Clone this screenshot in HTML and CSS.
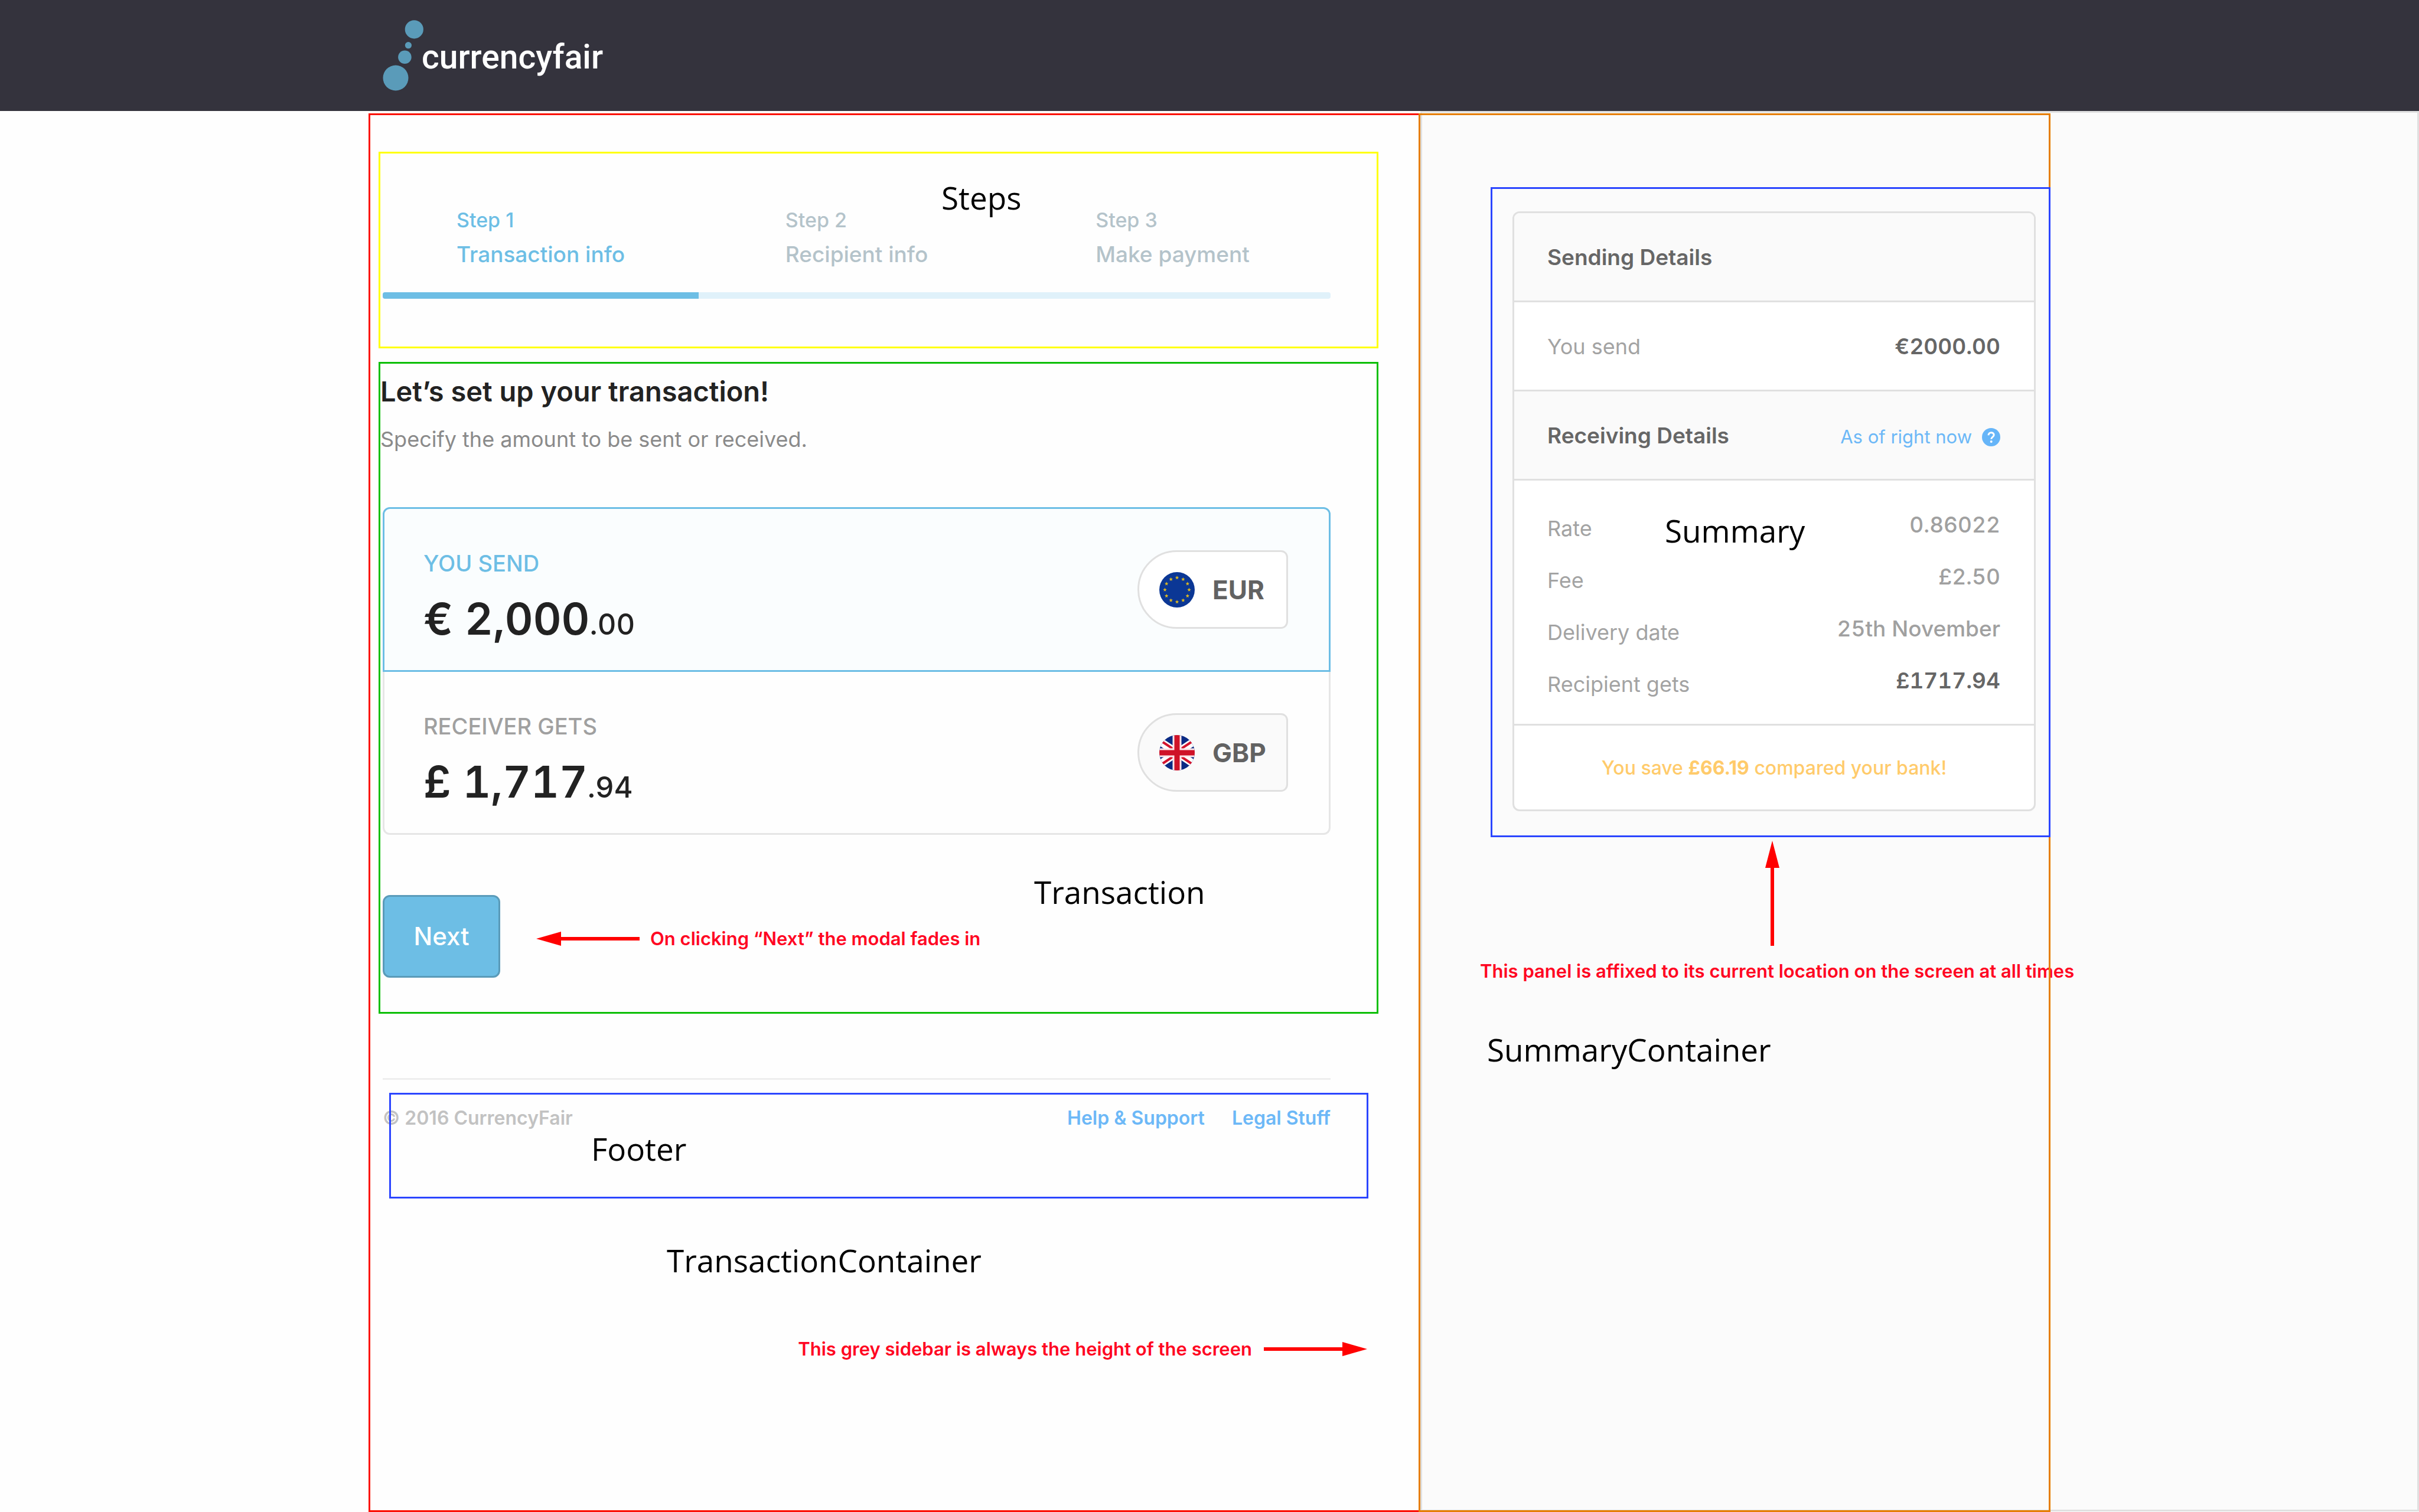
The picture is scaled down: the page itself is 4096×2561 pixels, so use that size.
FILE: index.html
```
<!DOCTYPE html>
<html lang="en">
<head>
<meta charset="utf-8">
<meta name="viewport" content="width=device-width, initial-scale=1">
<title>CurrencyFair – Transaction info</title>
<link rel="stylesheet" href="styles.css">
</head>
<body>
<header class="site-header">
  <a class="logo" href="#">
    <svg class="logo-mark" viewBox="0 0 66 120" aria-hidden="true">
      <circle cx="22" cy="98" r="21.5"/>
      <circle cx="37.4" cy="62.7" r="11.3"/>
      <circle cx="43.4" cy="42.7" r="5.6"/>
      <circle cx="53.3" cy="15.8" r="15.6"/>
    </svg>
    <span class="logo-name">currencyfair</span>
  </a>
</header>

<main class="page">
  <div class="sidebar"></div>

  <div class="transaction-container">
    <section class="steps">
      <ol class="step-list">
        <li class="step step-current"><div><span class="step-number">Step 1</span><span class="step-name">Transaction info</span></div></li>
        <li class="step"><div><span class="step-number">Step 2</span><span class="step-name">Recipient info</span></div></li>
        <li class="step"><div><span class="step-number">Step 3</span><span class="step-name">Make payment</span></div></li>
      </ol>
      <div class="track" role="progressbar" aria-label="Progress" aria-valuemin="0" aria-valuemax="3" aria-valuenow="1"><div class="track-fill"></div></div>
      <span class="region-name name-steps">Steps</span>
    </section>

    <section class="transaction">
      <h1 class="title">Let’s set up your transaction!</h1>
      <p class="lead">Specify the amount to be sent or received.</p>

      <div class="amount amount-active">
        <div class="amount-text">
          <span class="amount-label">YOU SEND</span>
          <span class="amount-value">€ 2,000<span class="cents">.00</span></span>
        </div>
        <button class="currency" type="button">
          <svg class="flag" viewBox="0 0 60 60" aria-hidden="true">
            <defs><path id="star" d="M0-3.4 .9-1.2 3.2-1 1.4.5 2 2.8 0 1.6-2 2.8-1.4.5-3.2-1-.9-1.2z"/></defs>
            <circle cx="30" cy="30" r="30" fill="#0b3795"/>
            <g fill="#dcb822">
              <use href="#star" x="30" y="9.5"/><use href="#star" x="40.3" y="12.2"/><use href="#star" x="47.8" y="19.7"/>
              <use href="#star" x="50.5" y="30"/><use href="#star" x="47.8" y="40.3"/><use href="#star" x="40.3" y="47.8"/>
              <use href="#star" x="30" y="50.5"/><use href="#star" x="19.7" y="47.8"/><use href="#star" x="12.2" y="40.3"/>
              <use href="#star" x="9.5" y="30"/><use href="#star" x="12.2" y="19.7"/><use href="#star" x="19.7" y="12.2"/>
            </g>
          </svg>
          EUR
        </button>
      </div>

      <div class="amount">
        <div class="amount-text">
          <span class="amount-label">RECEIVER GETS</span>
          <span class="amount-value">£ 1,717<span class="cents">.94</span></span>
        </div>
        <button class="currency" type="button">
          <svg class="flag" viewBox="0 0 60 60" aria-hidden="true">
            <defs><clipPath id="disc"><circle cx="30" cy="30" r="30"/></clipPath></defs>
            <g clip-path="url(#disc)">
              <path fill="#0a2a84" d="M0 0h60v60H0z"/>
              <path stroke="#fff" stroke-width="13" d="M-6 6 66 54M-6 54 66 6"/>
              <path stroke="#d3142e" stroke-width="4" d="M-6 4 30 28M30 32l36 24M-6 56l36-24M30 28 66 4"/>
              <path stroke="#fbe6ea" stroke-width="15" d="M30 0v60M0 30h60"/>
              <path stroke="#cf1228" stroke-width="9" d="M30 0v60M0 30h60"/>
            </g>
          </svg>
          GBP
        </button>
      </div>

      <div class="actions">
        <button class="next" type="button">Next</button>
        <div class="note note-next">
          <svg class="arrow" viewBox="0 0 175 24" aria-hidden="true"><path d="M0 12 42 0v9h133v6H42v9z"/></svg>
          <span>On clicking “Next” the modal fades in</span>
        </div>
      </div>
      <span class="region-name name-transaction">Transaction</span>
    </section>

    <footer class="footer">
      <span class="copyright">© 2016 CurrencyFair</span>
      <nav class="footer-links"><a href="#">Help &amp; Support</a><a href="#">Legal Stuff</a></nav>
      <div class="footer-frame"></div>
      <span class="region-name name-footer">Footer</span>
    </footer>

    <span class="region-name name-transaction-container">TransactionContainer</span>
    <div class="note note-sidebar">
      <span>This grey sidebar is always the height of the screen</span>
      <svg class="arrow" viewBox="0 0 175 24" aria-hidden="true"><path d="M175 12 133 0v9H0v6h133v9z"/></svg>
    </div>
  </div>

  <aside class="summary-container">
    <section class="summary">
      <div class="card">
        <div class="row row-head"><h2 class="row-title">Sending Details</h2></div>
        <div class="row"><span class="row-label">You send</span><strong class="row-value">€2000.00</strong></div>
        <div class="row row-head">
          <h2 class="row-title">Receiving Details</h2>
          <a class="rate-time" href="#">As of right now
            <svg class="help" viewBox="0 0 31 31" aria-hidden="true">
              <circle cx="15.5" cy="15.5" r="15.5" fill="#66b5f8"/>
              <path d="M11 12.2c0-6 9.200-5.800 9.200-.4 0 3.200-4.500 3.400-4.500 7" fill="none" stroke="#fff" stroke-width="3"/>
              <circle cx="15.700" cy="23" r="2" fill="#fff"/>
            </svg>
          </a>
        </div>
        <dl class="details">
          <div class="detail"><dt>Rate</dt><dd>0.86022</dd></div>
          <div class="detail"><dt>Fee</dt><dd>£2.50</dd></div>
          <div class="detail"><dt>Delivery date</dt><dd>25th November</dd></div>
          <div class="detail"><dt>Recipient gets</dt><dd class="total">£1717.94</dd></div>
        </dl>
        <p class="saving">You save <b>£66.19</b> compared your bank!</p>
      </div>
      <span class="region-name name-summary">Summary</span>
    </section>
    <svg class="arrow-up" viewBox="0 0 24 178" aria-hidden="true"><path d="M12 0 24 46h-9v132H9V46H0z"/></svg>
    <p class="note note-panel">This panel is affixed to its current location on the screen at all times</p>
    <span class="region-name name-summary-container">SummaryContainer</span>
  </aside>
</main>
</body>
</html>
```

FILE: styles.css
```
:root {
  --columns: 624fr 1781fr 1067fr 624fr;
  --blue: #6dbee5;
  --line: #e0e0e0;
  --header: 188px;
}

* { box-sizing: border-box; }

body {
  margin: 0;
  min-height: 100vh;
  display: flex;
  flex-direction: column;
  background: #fefefe;
  color: #222;
  font: 500 37px/48px "Inter", "Liberation Sans", sans-serif;
}

h1, h2, p, ol, dl, dd { margin: 0; padding: 0; }
a { text-decoration: none; }
button { font: inherit; cursor: pointer; }

/* Header */
.site-header {
  display: grid;
  grid-template-columns: var(--columns);
  height: var(--header);
  background: #34333d;
}
.logo {
  grid-column: 2;
  display: flex;
  align-items: center;
  padding-left: 24px;
  color: #fff;
}
.logo-mark { width: 66px; height: 120px; overflow: visible; fill: #5a9bb9; }
.logo-name { padding-top: 6px; font: 500 57px/66px "Roboto", sans-serif; }

/* Page columns */
.page {
  flex: 1;
  display: grid;
  grid-template-columns: var(--columns);
}
.sidebar {
  grid-area: 1 / 3 / 2 / 5;
  margin-bottom: 1px;
  background: #fbfbfb;
  border: 3px solid var(--line);
}
.transaction-container {
  grid-area: 1 / 2 / 2 / 3;
  position: relative;
  margin-top: 4px;
  padding: 62px 71px 0 14px;
  border: 3px solid #fb1100;
  border-right: 0;
}
.summary-container {
  grid-area: 1 / 3 / 2 / 4;
  position: relative;
  margin: 4px 0 0 -3px;
  padding: 122px 0 0 119px;
  border: 3px solid transparent;
}
.summary-container::after {
  content: "";
  position: absolute;
  inset: -3px;
  border: 3px solid #e67e00;
  pointer-events: none;
}

/* Annotations */
.region-name {
  position: absolute;
  color: #000;
  font: 400 53px/60px "Open Sans", "Noto Sans", sans-serif;
  white-space: nowrap;
}
.name-steps { left: 950px; top: 45px; }
.name-transaction { left: 1107px; top: 865px; }
.name-footer { left: 353px; top: 87px; }
.name-transaction-container { left: 502px; top: 1910px; }
.name-summary { left: 292px; top: 549px; }
.name-summary-container { left: 113px; top: 1553px; }

.note {
  display: flex;
  align-items: center;
  color: #ff0522;
  font-size: 31px;
  line-height: 44px;
  font-weight: 600;
  white-space: nowrap;
}
.arrow { width: 175px; height: 24px; fill: #f00; }
.note-next { gap: 18px; margin-left: 61px; padding-top: 7px; }
.note-sidebar { position: absolute; right: 90px; top: 2068px; gap: 20px; }
.note-panel { position: absolute; left: 101px; top: 1428px; }
.arrow-up {
  position: absolute;
  left: 584px;
  top: 1229px;
  width: 24px;
  height: 178px;
  fill: #f00;
}

/* Steps */
.steps {
  position: relative;
  padding: 91px 78px 81px 4px;
  border: 3px solid #ff0;
}
.step-list {
  display: grid;
  grid-template-columns: repeat(3, 1fr);
  list-style: none;
}
.step { display: flex; justify-content: center; color: #b4c3ca; }
.step-current { color: var(--blue); }
.step-number, .step-name { display: block; }
.step-number { margin-bottom: 12px; font-size: 34px; line-height: 44px; }
.track {
  height: 11px;
  margin-top: 40px;
  border-radius: 4px;
  background: #e0f1fa;
  overflow: hidden;
}
.track-fill { width: calc(100% / 3); height: 100%; background: var(--blue); }

/* Transaction */
.transaction {
  position: relative;
  margin-top: 23px;
  padding: 19px 78px 58px 0;
  border: 3px solid #0cbf07;
}
.title { font-size: 47px; line-height: 56px; font-weight: 600; }
.lead {
  margin: 29px 0 91px;
  color: #8a8a8a;
  font-size: 36px;
  font-weight: 400;
}
.amount {
  display: flex;
  justify-content: space-between;
  align-items: center;
  margin-left: 4px;
  padding: 42px 69px 42px 66px;
  border: 3px solid #e6e6e6;
  border-top: 0;
  border-radius: 0 0 12px 12px;
}
.amount-active {
  border: 3px solid var(--blue);
  border-radius: 12px 12px 0 0;
  background: #fafdfe;
}
.amount-text { padding-top: 26px; }
.amount-label, .amount-value { display: block; }
.amount-label { margin-bottom: 25px; color: #a0a0a0; font-size: 38px; }
.amount-active .amount-label { color: var(--blue); }
.amount-value {
  font-size: 74px;
  line-height: 90px;
  font-weight: 600;
  font-variant-numeric: tabular-nums;
}
.cents { font-size: 49px; line-height: 49px; font-weight: 500; }
.currency {
  display: flex;
  align-items: center;
  gap: 30px;
  width: 255px;
  height: 133px;
  padding: 0 0 0 34px;
  border: 3px solid var(--line);
  border-radius: 67px 12px 12px 67px;
  background: #fafafa;
  color: #626262;
  font-size: 44px;
  font-weight: 700;
}
.amount-active .currency { background: #fff; }
.flag { width: 60px; height: 60px; }

.actions { display: flex; align-items: center; margin: 102px 0 0 4px; }
.next {
  width: 199px;
  height: 140px;
  padding: 0;
  border: 3px solid #5a9bb9;
  border-radius: 12px;
  background: var(--blue);
  color: #fff;
  font-size: 42px;
}

/* Footer */
.footer {
  position: relative;
  display: flex;
  justify-content: space-between;
  margin: 109px 81px 0 7px;
  padding-top: 43px;
  border-top: 3px solid #eee;
  font-size: 32px;
  line-height: 44px;
  font-weight: 600;
}
.copyright { color: #c2c2c2; }
.footer-links { display: flex; gap: 46px; }
.footer-links a { color: #6cb8f7; }
.footer-frame {
  position: absolute;
  left: 11px;
  right: -64px;
  top: 22px;
  height: 179px;
  border: 3px solid #2b45ff;
  pointer-events: none;
}

/* Summary */
.summary {
  position: relative;
  z-index: 1;
  margin-right: -3px;
  padding: 38px 22px 41px 34px;
  border: 3px solid #2b45ff;
}
.card {
  border: 3px solid var(--line);
  border-radius: 12px;
  background: #fff;
  overflow: hidden;
}
.row {
  display: flex;
  justify-content: space-between;
  align-items: center;
  height: 151px;
  padding: 2px 57px 0 56px;
  border-bottom: 3px solid var(--line);
}
.row-head { background: #fafafa; }
.row-title { color: #666; font-size: 37px; font-weight: 600; }
.row-label { color: #a3a3a3; font-size: 36px; font-weight: 400; }
.row-value { color: #666; font-weight: 600; font-variant-numeric: tabular-nums; }
.rate-time {
  display: flex;
  align-items: center;
  gap: 17px;
  padding-top: 4px;
  color: #6cb8f7;
  font-size: 31px;
  font-weight: 400;
}
.help { width: 31px; height: 31px; }
.details { padding: 37px 57px 23px 56px; border-bottom: 3px solid var(--line); }
.detail {
  display: flex;
  justify-content: space-between;
  align-items: center;
  height: 88px;
}
.detail dt { color: #a3a3a3; font-size: 36px; font-weight: 400; }
.detail dd { padding-bottom: 12px; color: #a0a0a0; font-variant-numeric: tabular-nums; }
.detail .total { color: #666; font-weight: 600; }
.saving {
  padding: 50px 0 48px;
  color: #ffcb6b;
  font-size: 32px;
  line-height: 44px;
  text-align: center;
}
.saving b { font-weight: 700; }
```
